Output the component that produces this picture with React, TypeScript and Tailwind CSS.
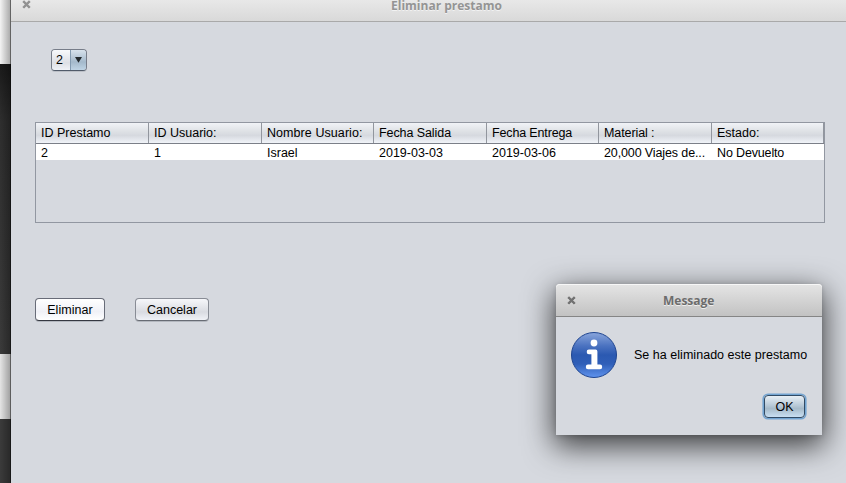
import React from "react";

const columns = [
  { head: "ID Prestamo", cell: "2", width: "w-[113px]", hs: "tracking-normal", cs: "tracking-normal" },
  { head: "ID Usuario:", cell: "1", width: "w-[113px]", hs: "tracking-normal", cs: "tracking-normal" },
  { head: "Nombre Usuario:", cell: "Israel", width: "w-[112px]", hs: "tracking-[0.07px]", cs: "tracking-normal" },
  { head: "Fecha Salida", cell: "2019-03-03", width: "w-[113px]", hs: "tracking-[-0.08px]", cs: "tracking-normal" },
  { head: "Fecha Entrega", cell: "2019-03-06", width: "w-[112px]", hs: "tracking-[-0.15px]", cs: "tracking-normal" },
  { head: "Material :", cell: "20,000 Viajes de...", width: "w-[113px]", hs: "tracking-[-0.1px]", cs: "tracking-[-0.12px]" },
  { head: "Estado:", cell: "No Devuelto", width: "w-[112px]", hs: "tracking-normal", cs: "tracking-[-0.15px]" },
];

function CloseMark({ color }: { color: string }) {
  return (
    <svg width="9" height="10" viewBox="0 0 9 10" className="shrink-0" fill="none">
      <path d="M1.2 2.2 7.8 8.8M7.8 2.2 1.2 8.8" stroke="#ffffff" strokeOpacity=".5" strokeWidth="2.2" />
      <path d="M1.2 1.2 7.8 7.8M7.8 1.2 1.2 7.8" stroke={color} strokeWidth="2.4" />
    </svg>
  );
}

function Table() {
  return (
    <div className="ml-6 mt-[51px] h-[101px] w-[790px] border border-[#9297a1]">
      <div className="flex h-[21px] border-b border-[#7b7f88] bg-[linear-gradient(#f1f3f7_0%,#dfe2e6_40%,#d6d9df_62%,#f0f3f8_100%)]">
        {columns.map((c) => (
          <div key={c.head} className={`${c.width} h-5 shrink-0 whitespace-nowrap border-r border-[#92969e] pl-[5px] leading-[20px] ${c.hs}`}>
            {c.head}
          </div>
        ))}
      </div>
      <div className="flex h-4 bg-white">
        {columns.map((c) => (
          <div key={c.head} className={`${c.width} h-4 shrink-0 whitespace-nowrap pl-[5px] leading-[18px] ${c.cs}`}>
            {c.cell}
          </div>
        ))}
      </div>
    </div>
  );
}

function InfoIcon() {
  return (
    <svg width="48" height="48" viewBox="0 0 48 48" className="shrink-0">
      <defs>
        <linearGradient id="ball" x1="0" y1="0" x2="0" y2="1">
          <stop offset="0" stopColor="#8aa6dc" />
          <stop offset=".3" stopColor="#4a72c0" />
          <stop offset=".5" stopColor="#2b59b1" />
          <stop offset=".7" stopColor="#305fb8" />
          <stop offset="1" stopColor="#6094ee" />
        </linearGradient>
      </defs>
      <circle cx="24" cy="24" r="22.5" fill="url(#ball)" stroke="#1f4590" />
      <circle cx="24" cy="12" r="3.4" fill="#fff" />
      <path d="M18.9 18.6H25.6Q27.4 18.6 27.4 20.4V33.6H30Q32.2 33.6 32.2 35.9T30 38.2H18Q15.8 38.2 15.8 35.9T18 33.6H21.4V23.2H18.9Q16.7 23.2 16.7 20.9T18.9 18.6Z" fill="#fff" />
    </svg>
  );
}

function MessageDialog() {
  return (
    <div className="absolute left-[556px] top-[284px] h-[151px] w-[266px] rounded-t-[4px] bg-[#d6d9df] shadow-[0_9px_30px_2px_rgba(0,0,0,0.72),0_1px_5px_rgba(0,0,0,0.15)]">
      <div className="flex h-[33px] items-center rounded-t-[4px] border-b border-[#858585] bg-[linear-gradient(#e5e5e5,#c2c2c2)] pl-[10.5px] pt-px shadow-[inset_0_1px_0_#f7f7f7]">
        <CloseMark color="#727272" />
        <h2 className="ml-[87.5px] whitespace-nowrap font-['Open_Sans',sans-serif] text-[12px] font-bold text-[#6c6c6c] [text-shadow:0_1px_0_#eeeeee]">Message</h2>
      </div>
      <div className="flex h-[76px] items-center pl-[14px]">
        <InfoIcon />
        <p className="ml-4 whitespace-nowrap tracking-[0.03px]">Se ha eliminado este prestamo</p>
      </div>
      <div className="flex justify-end pr-[17px] pt-[2px]">
        <button className="h-[23px] w-[41px] rounded-[4px] border border-[#314b65] bg-[linear-gradient(#e8eff5_0%,#b8c9d7_45%,#a6bac9_60%,#c8dff2_100%)] leading-[22px] shadow-[0_0_0_1.6px_#73a4d1]">OK</button>
      </div>
    </div>
  );
}

export default function App() {
  return (
    <main className="relative flex h-[483px] w-[846px] overflow-hidden bg-[#d6d9df] font-['Liberation_Sans',Arial,sans-serif] text-[12.5px] text-black">
      <aside className="relative w-[11px] shrink-0">
        <div className="h-16 bg-[#f8f8f8]" />
        <div className="h-[290px] bg-[linear-gradient(#1b1b1b,#303030_20%,#3c3c3c)]" />
        <div className="h-[65px] bg-[#e9e9e9]" />
        <div className="h-16 bg-[#3c3c3c]" />
        <div className="absolute inset-0 bg-[linear-gradient(90deg,rgba(0,0,0,0.02),rgba(0,0,0,0.3)_90%,rgba(0,0,0,0.6)_91%)]" />
      </aside>
      <section className="w-[835px]">
        <header className="flex h-[22px] items-start border-b border-[#a9a9a9] bg-[linear-gradient(#e8e8e8,#d9d9d9)] pl-[10.5px]">
          <CloseMark color="#929292" />
          <h1 className="ml-[360.5px] whitespace-nowrap font-['Open_Sans',sans-serif] text-[12px] font-bold leading-[12px] text-[#949494] [text-shadow:0_1px_0_#f2f2f2]">Eliminar prestamo</h1>
        </header>
        <div className="ml-10 mt-[27px] flex h-[22px] w-9 overflow-hidden rounded-[4px] border border-[#777d89] border-b-[#515b6a] shadow-[0_1px_0_#bcc0c7]">
          <span className="w-[19px] border-r border-[#839bb1] bg-[linear-gradient(#f8f9fb,#dddfe5_65%,#f0f2f7)] pl-1 leading-[20px]">2</span>
          <span className="flex w-[15px] items-center justify-center bg-[linear-gradient(#d7e2ec,#a4b9cb_60%,#bfd4e5)]">
            <svg width="7" height="6" viewBox="0 0 7 6"><path d="M0 0H7L3.5 5.8Z" fill="#232a2e" /></svg>
          </span>
        </div>
        <Table />
        <div className="ml-6 mt-[75px] flex gap-[30px]">
          <button className="h-[23px] w-[70px] rounded-[4px] border border-[#686c78] border-b-[#353841] bg-[linear-gradient(#ffffff,#f0f1f7_60%,#ffffff)] leading-[22px] tracking-[0.05px] shadow-[0_1px_0_#b4b8bf]">Eliminar</button>
          <button className="h-[23px] w-[74px] rounded-[4px] border border-[#888c95] border-b-[#686c74] bg-[linear-gradient(#f6f7fa,#d9dbe1_62%,#f0f2f7)] leading-[22px] shadow-[0_1px_0_#b4b8bf]">Cancelar</button>
        </div>
      </section>
      <MessageDialog />
    </main>
  );
}
